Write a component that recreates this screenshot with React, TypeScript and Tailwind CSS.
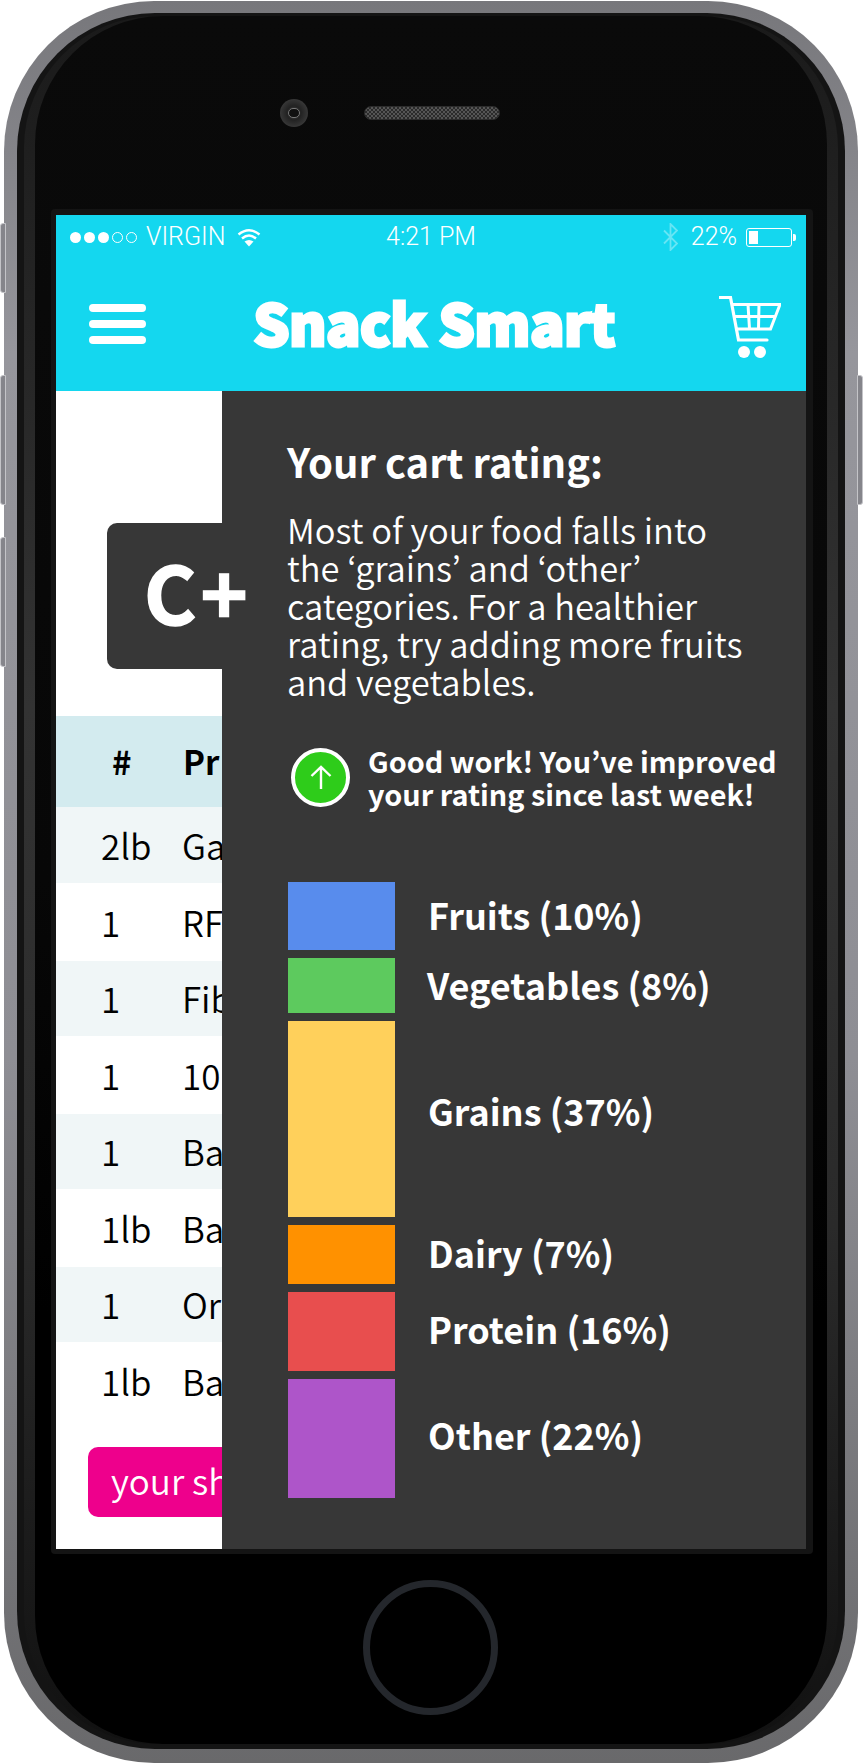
import React from "react";

const sans = "font-['Noto_Sans_CJK_JP','Noto_Sans',sans-serif]";

const rows = [
  { q: "2lb", n: "Ga", tint: true, h: "h-[76px]" },
  { q: "1", n: "RF", tint: false, h: "h-[78px]" },
  { q: "1", n: "Fib", tint: true, h: "h-[75px]" },
  { q: "1", n: "10", tint: false, h: "h-[78px]" },
  { q: "1", n: "Ba", tint: true, h: "h-[75px]" },
  { q: "1lb", n: "Ba", tint: false, h: "h-[78px]" },
  { q: "1", n: "Or", tint: true, h: "h-[75px]" },
  { q: "1lb", n: "Ba", tint: false, h: "h-[78px]" },
];

function SideButton({ className }: { className: string }) {
  return <div className={"absolute w-[6px] bg-[#85858b] border border-[#c4c4c8] " + className} />;
}

function Wifi() {
  return (
    <svg width="24" height="19" viewBox="0 0 24 19" fill="none" className="ml-[11px]">
      <path d="M1.5 6.5 Q12 -2 22.5 6.5" stroke="#fff" strokeWidth="2.4" />
      <path d="M5 10.5 Q12 4.5 19 10.5" stroke="#fff" strokeWidth="2.4" />
      <path d="M12 18.5 L7.5 13.5 Q12 10.5 16.5 13.5 Z" fill="#fff" />
    </svg>
  );
}

function Bluetooth() {
  return (
    <svg width="15" height="28" viewBox="0 0 15 28" fill="none" className="opacity-35">
      <path d="M1 7.5 L14 20.5 L7.5 27 L7.5 1 L14 7.5 L1 20.5" stroke="#fff" strokeWidth="1.8" />
    </svg>
  );
}

function Battery() {
  return (
    <div className="flex items-center ml-[9px]">
      <div className="w-[46px] h-[19px] border border-white rounded-[3px] p-[2px]">
        <div className="w-[9px] h-full bg-white" />
      </div>
      <div className="w-[3px] h-[7px] bg-white rounded-r-[2px] ml-[1px]" />
    </div>
  );
}

function Cart() {
  return (
    <svg width="62" height="62" viewBox="0 0 62 62" fill="none" className="mt-[4px]">
      <path d="M0 1.5 H11.5 L19.5 44 H48" stroke="#fff" strokeWidth="3.2" strokeLinecap="round" />
      <path d="M13.5 8.5 H61 L51.5 33 H17.5" stroke="#fff" strokeWidth="3" />
      <path d="M15.5 20.5 H57 M29 8.5 L30.5 33 M40 8.5 L39.5 33" stroke="#fff" strokeWidth="3" />
      <circle cx="25" cy="56" r="6" fill="#fff" />
      <circle cx="41" cy="56" r="6" fill="#fff" />
    </svg>
  );
}

function ArrowUp() {
  return (
    <svg width="24" height="26" viewBox="0 0 24 26" fill="none">
      <path d="M12 25 V3 M2.5 12 L12 3 L21.5 12" stroke="#fff" strokeWidth="2.4" />
    </svg>
  );
}

const bars = [
  { label: "Fruits (10%)", bg: "bg-[#588ced]", h: "h-[68px]", ml: "ml-[33px] -mt-[5px]" },
  { label: "Vegetables (8%)", bg: "bg-[#5dca5e]", h: "h-[55px]", ml: "ml-[32px] -mt-[3px]" },
  { label: "Grains (37%)", bg: "bg-[#ffd05b]", h: "h-[196px]", ml: "ml-[33px] -mt-[19px]" },
  { label: "Dairy (7%)", bg: "bg-[#ff9100]", h: "h-[59px]", ml: "ml-[33px] -mt-[5px]" },
  { label: "Protein (16%)", bg: "bg-[#e84e4e]", h: "h-[79px]", ml: "ml-[33px] -mt-[8px]" },
  { label: "Other (22%)", bg: "bg-[#ae55c9]", h: "h-[119px]", ml: "ml-[33px] -mt-[10px]" },
];

export default function App() {
  return (
    <div className="relative w-[863px] h-[1763px] bg-white overflow-hidden pl-[4px] pt-[1px]">
      <SideButton className="left-0 top-[223px] h-[70px] rounded-l-[3px]" />
      <SideButton className="left-0 top-[375px] h-[130px] rounded-l-[3px]" />
      <SideButton className="left-0 top-[537px] h-[130px] rounded-l-[3px]" />
      <SideButton className="right-0 top-[375px] h-[130px] rounded-r-[3px]" />

      <div className="w-[854px] h-[1762px] rounded-[150px] bg-[linear-gradient(180deg,#77777b_0%,#96969c_20%,#8e8e94_60%,#69696b_100%)] pt-[12px] px-[13px] pb-[14px]">
        <div className="h-full rounded-[138px] bg-[#141414] px-[7px] pt-[3px] pb-[5px]">
          <div className="h-full rounded-[132px] bg-[linear-gradient(180deg,#1a1a1a_0%,#333_40%,#2a2a2a_70%,#111_100%)] px-[11px]">
            <div className="h-full rounded-[128px] bg-[linear-gradient(180deg,#0a0a0a_0%,#070707_50%,#000_75%)] pl-[16px] pr-[14px]">
              <div className="h-[193px] flex items-center pl-[229px]">
                <div className="w-[28px] h-[28px] rounded-full bg-[radial-gradient(circle,#555_0%,#222_35%,#3a3a3a_75%,#4a4a4a_100%)] flex items-center justify-center">
                  <div className="w-[12px] h-[10px] rounded-full bg-[#111] border border-[#777]" />
                </div>
                <div className="ml-[56px] w-[136px] h-[14px] rounded-full border border-[#2c2c2c] bg-[repeating-conic-gradient(#555_0_25%,#2b2b2b_0_50%)] bg-[length:4px_4px]" />
              </div>

              <div className="bg-[#141414] rounded-[4px] pl-[5px] pr-[6px] pt-[6px] pb-[5px]">
                <div className="relative w-[750px] h-[1334px] overflow-hidden bg-white">
                  <div className="h-[176px] bg-[#14d7ef]">
                    <div className="h-[44px] grid grid-cols-3 items-center text-white text-[25px] font-light font-['Roboto','Liberation_Sans',sans-serif]">
                      <div className="flex items-center pl-[14px]">
                        <div className="flex gap-[3px]">
                          <div className="w-[11px] h-[11px] rounded-full bg-white" />
                          <div className="w-[11px] h-[11px] rounded-full bg-white" />
                          <div className="w-[11px] h-[11px] rounded-full bg-white" />
                          <div className="w-[11px] h-[11px] rounded-full border border-white" />
                          <div className="w-[11px] h-[11px] rounded-full border border-white" />
                        </div>
                        <span className="ml-[9px]">VIRGIN</span>
                        <Wifi />
                      </div>
                      <div className="text-center">4:21 PM</div>
                      <div className="flex items-center justify-end pr-[10px]">
                        <Bluetooth />
                        <span className="ml-[13px]">22%</span>
                        <Battery />
                      </div>
                    </div>
                    <div className="h-[132px] flex items-center justify-between pl-[33px] pr-[25px] text-white">
                      <div className="flex flex-col gap-[8px] -mt-[3px]">
                        <div className="w-[57px] h-[8px] rounded-full bg-white" />
                        <div className="w-[57px] h-[8px] rounded-full bg-white" />
                        <div className="w-[57px] h-[8px] rounded-full bg-white" />
                      </div>
                      <div className="text-[57px] leading-none font-black tracking-[-0.5px] -mt-[8px] ml-[3px] [-webkit-text-stroke:3px_white] font-['Noto_Sans_CJK_JP','Lato',sans-serif]">
                        Snack Smart
                      </div>
                      <Cart />
                    </div>
                  </div>

                  <div className={"pt-[132px] " + sans}>
                    <div className="ml-[51px] w-[176px] h-[146px] rounded-[10px] bg-[#373737] flex items-center pl-[37px] pb-[12px]">
                      <span className="relative z-10 text-white text-[80px] font-bold tracking-[4px] leading-none [-webkit-text-stroke:1.5px_white]">C+</span>
                    </div>
                    <div className="mt-[47px] h-[91px] bg-[#d3ebef] flex items-center text-[33px] font-bold text-black">
                      <div className="w-[127px] pl-[56px]">#</div>
                      <div>Pr</div>
                    </div>
                    {rows.map((r, i) => (
                      <div
                        key={i}
                        className={"flex items-center text-[35px] font-[350] text-black " + r.h + (r.tint ? " bg-[#f0f6f7]" : " bg-white")}
                      >
                        <div className="w-[126px] pl-[45px]">{r.q}</div>
                        <div>{r.n}</div>
                      </div>
                    ))}
                    <div className="mt-[27px] ml-[32px] w-[250px] h-[70px] rounded-[10px] bg-[#ee008c] text-white text-[35px] font-[350] flex items-center pl-[23px] pb-[4px]">
                      your sh
                    </div>
                  </div>

                  <div className={"absolute left-[166px] top-[176px] right-0 bottom-0 bg-[#373737] text-white pl-[65px] " + sans}>
                    <div className="pt-[45px] text-[40px] leading-[50px] font-bold">Your cart rating:</div>
                    <div className="mt-[24px] text-[34.5px] leading-[38px] font-[350] w-[490px]">
                      Most of your food falls into
                      <br />
                      the ‘grains’ and ‘other’
                      <br />
                      categories. For a healthier
                      <br />
                      rating, try adding more fruits
                      <br />
                      and vegetables.
                    </div>
                    <div className="mt-[44px] flex items-center">
                      <div className="ml-[4px] w-[59px] h-[59px] rounded-full border-4 border-white bg-[#2ecc1a] flex items-center justify-center">
                        <ArrowUp />
                      </div>
                      <div className="ml-[18px] text-[28.8px] leading-[33px] font-bold">
                        Good work! You’ve improved
                        <br />
                        your rating since last week!
                      </div>
                    </div>
                    <div className="mt-[72px] flex flex-col gap-[8px] ml-[1px]">
                      {bars.map((b) => (
                        <div key={b.label} className={"flex items-center " + b.h}>
                          <div className={"w-[107px] h-full " + b.bg} />
                          <div className={"text-[36px] font-bold leading-none " + b.ml}>{b.label}</div>
                        </div>
                      ))}
                    </div>
                  </div>
                </div>
              </div>

              <div className="h-[189px] flex items-center pl-[312px] pb-[3px]">
                <div className="w-[135px] h-[135px] rounded-full border-[7px] border-[#24272c] bg-black" />
              </div>
            </div>
          </div>
        </div>
      </div>
    </div>
  );
}
